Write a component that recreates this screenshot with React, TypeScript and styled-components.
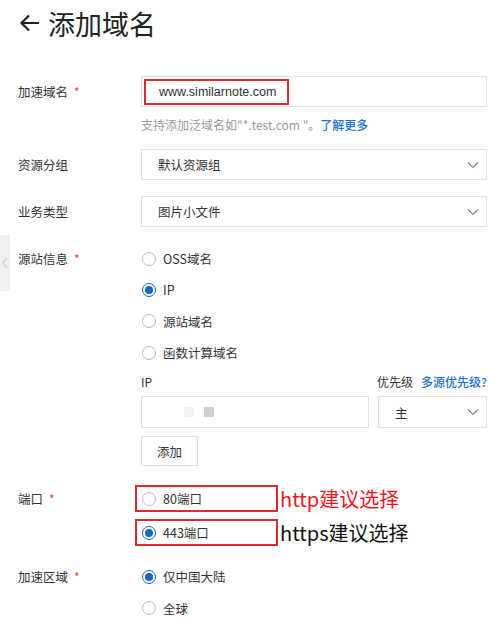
import React from "react";
import styled, { createGlobalStyle } from "styled-components";

const GlobalStyle = createGlobalStyle`
  html, body {
    margin: 0;
    padding: 0;
    background: #fff;
  }
  body {
    font-family: "Noto Sans CJK SC", "Noto Sans", "Liberation Sans", sans-serif;
    color: #333;
  }
`;

const Page = styled.div`
  position: relative;
  width: 500px;
  height: 621px;
  overflow: hidden;
  padding-left: 18px;
  box-sizing: border-box;
`;

const Header = styled.div`
  display: flex;
  align-items: center;
  gap: 6px;
  height: 46px;
  font-size: 27px;
  color: #222;
`;

const Form = styled.div`
  display: flex;
  flex-direction: column;
  margin-top: 30px;
`;

const Row = styled.div<{ $gap?: number }>`
  display: flex;
  margin-bottom: ${({ $gap }) => ($gap ?? 16)}px;
`;

const Label = styled.div<{ $h?: number }>`
  width: 123px;
  flex-shrink: 0;
  height: ${({ $h }) => $h ?? 31}px;
  display: flex;
  align-items: center;
  font-size: 12.5px;
  color: #333;
`;

const Star = styled.span`
  color: #e5484d;
  margin-left: 6px;
  font-size: 12px;
`;

const Field = styled.div`
  width: 346px;
  display: flex;
  flex-direction: column;
`;

const InputBox = styled.div<{ $w?: number }>`
  box-sizing: border-box;
  width: ${({ $w }) => ($w ? `${$w}px` : "100%")};
  height: 31px;
  border: 1px solid #e2e2e2;
  display: flex;
  align-items: center;
  padding: 0 2px;
  font-size: 12.5px;
  color: #333;
`;

const Marked = styled.div`
  box-sizing: border-box;
  height: 26px;
  width: 145px;
  border: 2px solid #e0262e;
  display: flex;
  align-items: center;
  padding-left: 13px;
  font-family: "Liberation Sans", "Noto Sans", sans-serif;
  font-size: 12.5px;
`;

const Hint = styled.div`
  margin-top: 10px;
  font-size: 12px;
  line-height: 16px;
  color: #999;
`;

const Link = styled.span`
  color: #1b6fd1;
  font-weight: 500;
`;

const Select = styled.div<{ $w?: number }>`
  box-sizing: border-box;
  width: ${({ $w }) => ($w ? `${$w}px` : "100%")};
  height: 31px;
  border: 1px solid #e2e2e2;
  display: flex;
  align-items: center;
  justify-content: space-between;
  padding: 0 6px 0 16px;
  font-size: 12.5px;
  color: #333;
`;

const RadioList = styled.div`
  display: flex;
  flex-direction: column;
`;

const RadioRow = styled.div`
  height: 31.3px;
  display: flex;
  align-items: center;
  gap: 7px;
  font-size: 12.5px;
  color: #333;
  padding-left: 1px;
`;

const Dot = styled.span<{ $on?: boolean }>`
  box-sizing: border-box;
  width: 14px;
  height: 14px;
  border-radius: 50%;
  border: 1px solid ${({ $on }) => ($on ? "#1565c8" : "#bdbdbd")};
  background: #fff;
  display: flex;
  align-items: center;
  justify-content: center;
  &::after {
    content: "";
    display: ${({ $on }) => ($on ? "block" : "none")};
    width: 8px;
    height: 8px;
    border-radius: 50%;
    background: #1565c8;
  }
`;

const SubHead = styled.div`
  display: flex;
  justify-content: space-between;
  align-items: center;
  height: 16px;
  margin-top: 5px;
  font-size: 12px;
  color: #333;
`;

const SubHeadRight = styled.div`
  display: flex;
  gap: 8px;
  width: 110px;
`;

const IpLine = styled.div`
  display: flex;
  gap: 9px;
  margin-top: 7px;
  height: 32px;
  & > * {
    height: 32px;
  }
`;

const Blur = styled.span<{ $c: string }>`
  width: 10px;
  height: 10px;
  background: ${({ $c }) => $c};
  margin-left: ${({ $c }) => ($c === "#f2f2f2" ? "40px" : "10px")};
`;

const Button = styled.div`
  box-sizing: border-box;
  margin-top: 8px;
  width: 57px;
  height: 30px;
  border: 1px solid #e2e2e2;
  display: flex;
  align-items: center;
  justify-content: center;
  font-size: 12.5px;
  color: #333;
`;

const PortList = styled.div`
  display: flex;
  flex-direction: column;
  gap: 7px;
  margin-left: -6px;
`;

const PortLine = styled.div`
  display: flex;
  align-items: center;
`;

const PortBox = styled.div`
  box-sizing: border-box;
  width: 143px;
  height: 27px;
  border: 2px solid #e0262e;
  display: flex;
  align-items: center;
  gap: 7px;
  padding-left: 5px;
  font-size: 12.5px;
  color: #333;
`;

const Note = styled.div<{ $red?: boolean }>`
  margin-left: 2px;
  font-size: 20px;
  line-height: 24px;
  color: ${({ $red }) => ($red ? "#f0141e" : "#111")};
  font-family: "Noto Sans CJK SC", "Noto Sans", sans-serif;
`;

const SideTab = styled.div`
  position: absolute;
  left: 0;
  top: 235px;
  width: 10px;
  height: 56px;
  background: #efefef;
  display: flex;
  align-items: center;
  justify-content: center;
`;

const Chevron = () => (
  <svg width="14" height="14" viewBox="0 0 14 14" fill="none">
    <path d="M2 4.5 L7 9.5 L12 4.5" stroke="#888" strokeWidth="1.1" />
  </svg>
);

const Radio = ({ on, text }: { on?: boolean; text: string }) => (
  <RadioRow>
    <Dot $on={on} />
    {text}
  </RadioRow>
);

export default function App() {
  return (
    <Page>
      <GlobalStyle />
      <SideTab>
        <svg width="8" height="12" viewBox="0 0 8 12" fill="none">
          <path d="M6 1 L2 6 L6 11" stroke="#bbb" strokeWidth="1" />
        </svg>
      </SideTab>
      <Header>
        <svg width="24" height="24" viewBox="0 0 24 24" fill="none">
          <path d="M21 12 H4 M11 4.5 L3.5 12 L11 19.5" stroke="#222" strokeWidth="2.2" />
        </svg>
        添加域名
      </Header>
      <Form>
        <Row>
          <Label>
            加速域名<Star>*</Star>
          </Label>
          <Field>
            <InputBox>
              <Marked>www.similarnote.com</Marked>
            </InputBox>
            <Hint>
              支持添加泛域名如"*.test.com "。<Link>了解更多</Link>
            </Hint>
          </Field>
        </Row>
        <Row>
          <Label>资源分组</Label>
          <Field>
            <Select>
              默认资源组
              <Chevron />
            </Select>
          </Field>
        </Row>
        <Row>
          <Label>业务类型</Label>
          <Field>
            <Select>
              图片小文件
              <Chevron />
            </Select>
          </Field>
        </Row>
        <Row $gap={19}>
          <Label>
            源站信息<Star>*</Star>
          </Label>
          <Field>
            <RadioList>
              <Radio text="OSS域名" />
              <Radio on text="IP" />
              <Radio text="源站域名" />
              <Radio text="函数计算域名" />
            </RadioList>
            <SubHead>
              <span>IP</span>
              <SubHeadRight>
                <span>优先级</span>
                <Link>多源优先级?</Link>
              </SubHeadRight>
            </SubHead>
            <IpLine>
              <InputBox $w={228}>
                <Blur $c="#f2f2f2" />
                <Blur $c="#cfcfcf" />
              </InputBox>
              <Select $w={109}>
                主
                <Chevron />
              </Select>
            </IpLine>
            <Button>添加</Button>
          </Field>
        </Row>
        <Row $gap={15}>
          <Label $h={27}>
            端口<Star>*</Star>
          </Label>
          <PortList>
            <PortLine>
              <PortBox>
                <Dot />
                80端口
              </PortBox>
              <Note $red>http建议选择</Note>
            </PortLine>
            <PortLine>
              <PortBox>
                <Dot $on />
                443端口
              </PortBox>
              <Note>https建议选择</Note>
            </PortLine>
          </PortList>
        </Row>
        <Row>
          <Label>
            加速区域<Star>*</Star>
          </Label>
          <Field>
            <RadioList>
              <Radio on text="仅中国大陆" />
              <Radio text="全球" />
            </RadioList>
          </Field>
        </Row>
      </Form>
    </Page>
  );
}
